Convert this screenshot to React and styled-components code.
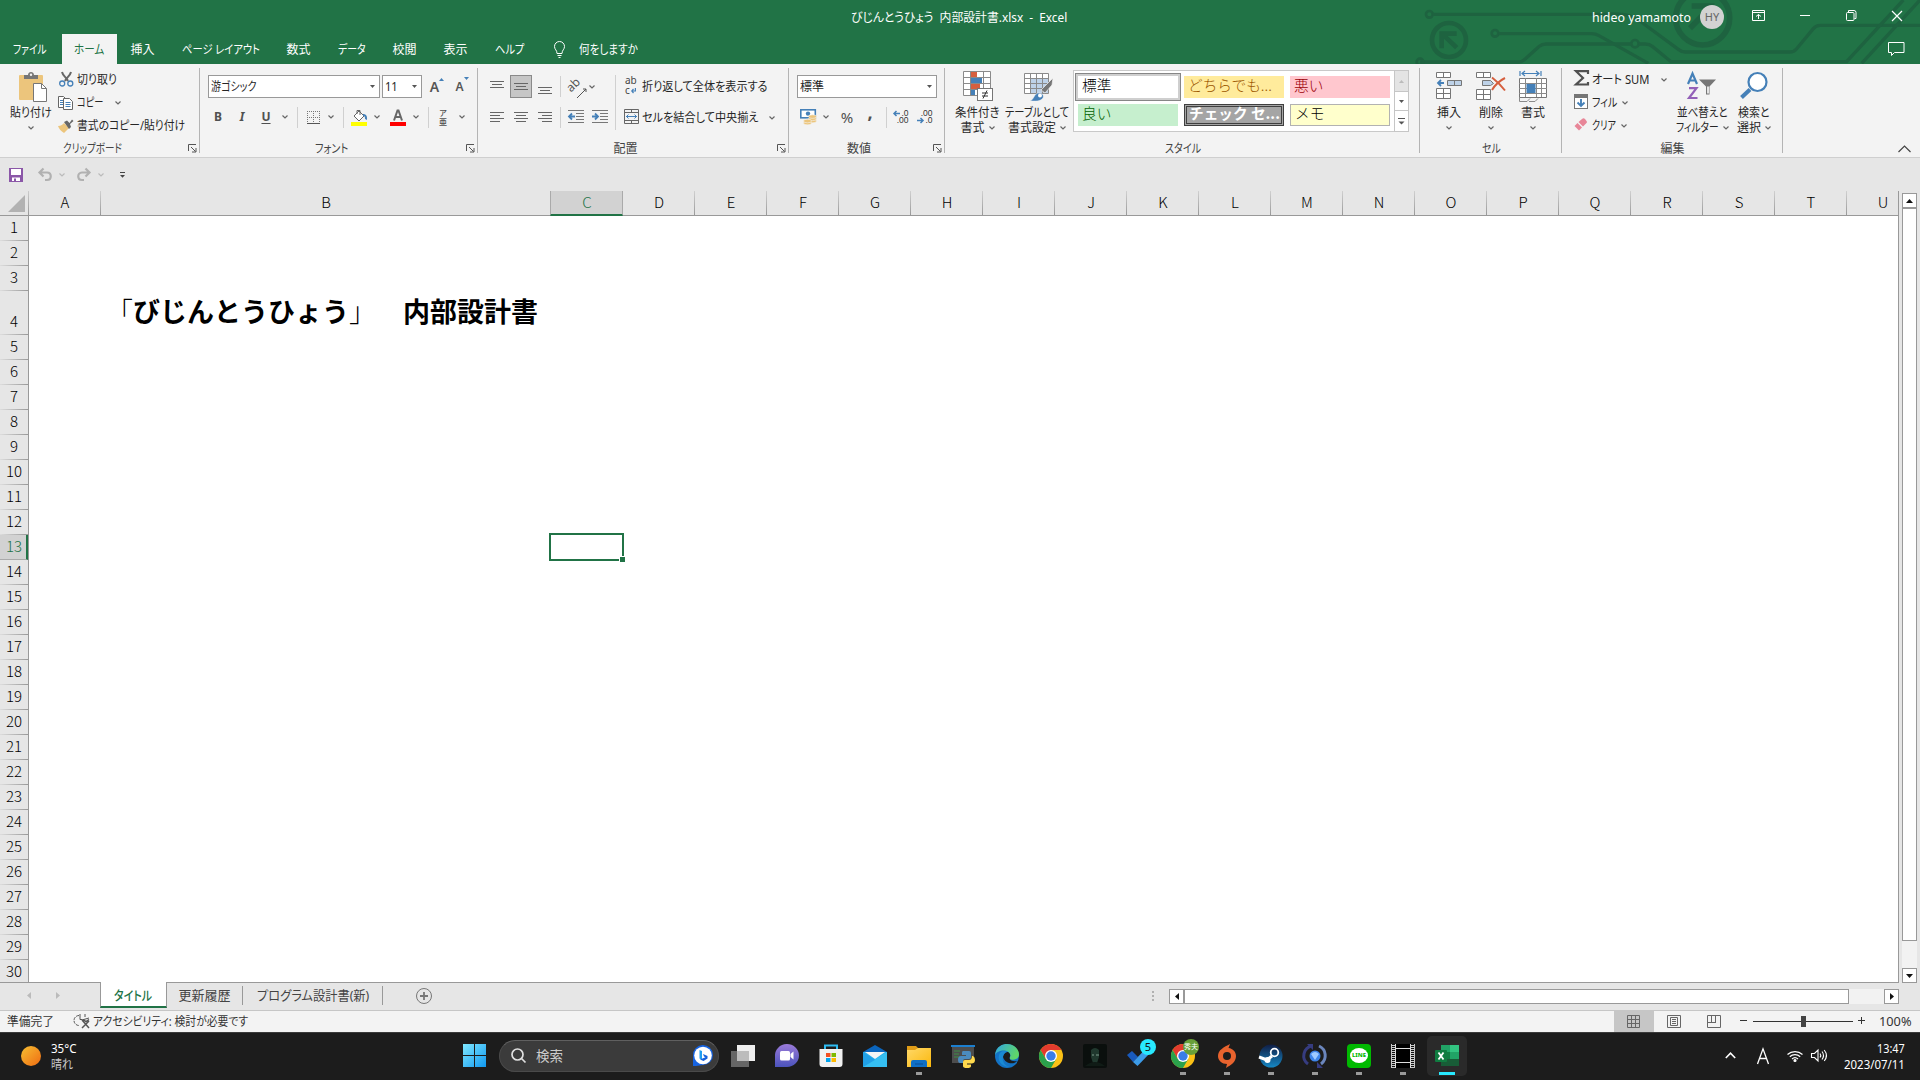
import React, { useLayoutEffect, useRef, useState } from "react";
import styled, { createGlobalStyle, css } from "styled-components";

const GREEN = "#217346";
const INK = "#262626";
const BLUE = "#4580b8";

const Global = createGlobalStyle`
  * { box-sizing: border-box; }
  html, body { margin: 0; padding: 0; overflow: hidden; background: #e6e6e6; }
  body {
    font-family: "Noto Sans", "Noto Sans CJK JP", sans-serif;
    font-size: 12px;
    line-height: 16px;
    color: ${INK};
  }
  svg { display: block; flex: none; overflow: visible; }
`;

/* ---------- text that is condensed to a given width ---------- */
const FitBox = styled.span`
  display: block;
  flex: none;
  width: ${(p) => p.$w}px;
  white-space: pre;
  font-feature-settings: "palt";
`;
const FitInner = styled.span`
  display: inline-block;
  transform-origin: 0 50%;
`;
function Fit({ w, children }) {
  const ref = useRef(null);
  const [scale, setScale] = useState(1);
  useLayoutEffect(() => {
    setScale(w / ref.current.offsetWidth);
  }, [w]);
  return (
    <FitBox $w={w}>
      <FitInner ref={ref} style={{ transform: `scaleX(${scale})` }}>{children}</FitInner>
    </FitBox>
  );
}

/* ---------- layout ---------- */
const Window = styled.div`
  width: 1920px;
  height: 1080px;
  display: flex;
  flex-direction: column;
  overflow: hidden;
`;
const Header = styled.header`
  position: relative;
  height: 64px;
  flex: none;
  background: ${GREEN};
  color: #fff;
`;
const Circuit = styled.svg`
  position: absolute;
  right: 0;
  top: 0;
  overflow: hidden !important;
`;
const TitleBar = styled.div`
  position: relative;
  height: 34px;
  display: flex;
  align-items: center;
  padding-left: 851px;
`;
const TitleText = styled.div`
  padding-top: 2px;
`;
const UserName = styled.div`
  margin-left: 525px;
  padding-top: 1px;
`;
const Avatar = styled.div`
  width: 24px;
  height: 24px;
  border-radius: 50%;
  margin: 0 28px 0 9px;
  background: #d2d2d2;
  color: #666;
  font-size: 11px;
  display: flex;
  align-items: center;
  justify-content: center;
`;
const WinButton = styled.div`
  width: ${(p) => p.$w}px;
  height: 28px;
  padding-bottom: 3px;
  display: flex;
  align-items: center;
`;
const TabBar = styled.nav`
  position: relative;
  height: 30px;
  display: flex;
  align-items: center;
`;
const Tab = styled.div`
  height: 30px;
  padding: 1px 12.5px 0;
  margin-right: 2px;
  display: flex;
  align-items: center;
  ${(p) => p.$active && css`background: #f3f3f3; color: ${GREEN}; margin: 0 1px; padding: 1px 13px 0 12px;`}
`;
const Ask = styled.div`
  display: flex;
  align-items: center;
  gap: 14px;
  margin-left: 16px;
  padding-top: 1px;
`;
const CommentSlot = styled.div`
  margin: 0 15px 1px auto;
`;

const Ribbon = styled.section`
  height: 94px;
  flex: none;
  display: flex;
  padding-top: 4px;
  background: #f3f3f3;
  border-bottom: 1px solid #cfcfcf;
`;
const Group = styled.div`
  width: ${(p) => p.$w}px;
  flex: none;
  display: flex;
  flex-direction: column;
  background: linear-gradient(#b4b4b4, #b4b4b4) right top / 1px 85px no-repeat;
`;
const GroupBody = styled.div`
  height: 72px;
  display: flex;
  padding-left: ${(p) => p.$pl || 0}px;
`;
const Caption = styled.div`
  height: 18px;
  display: flex;
  align-items: center;
  justify-content: center;
  color: #444;
`;
const Launcher = styled.div`
  width: 13px;
  margin-right: 3px;
  padding-left: 4px;
`;
const CaptionText = styled.div`
  flex: 1;
  display: flex;
  justify-content: center;
  padding-top: 2px;
`;
const Stack = styled.div`
  display: flex;
  flex-direction: column;
  margin-left: ${(p) => p.$ml || 0}px;
  ${(p) => p.$w && css`width: ${p.$w}px;`}
`;
const Line = styled.div`
  height: ${(p) => p.$h || 23}px;
  display: flex;
  align-items: center;
  padding-left: ${(p) => p.$pl || 0}px;
`;
const Cell = styled.div`
  width: ${(p) => p.$w}px;
  height: 24px;
  flex: none;
  display: flex;
  align-items: center;
  justify-content: center;
  color: #505050;
  font-weight: ${(p) => (p.$bold ? 700 : 400)};
  font-style: ${(p) => (p.$italic ? "italic" : "normal")};
  text-decoration: ${(p) => (p.$under ? "underline" : "none")};
  text-underline-offset: 2px;
  font-size: ${(p) => p.$fs || 12}px;
  padding-bottom: ${(p) => p.$lift || 0}px;
`;
const Pressed = styled.div`
  width: 22px;
  height: 23px;
  border: 1px solid #8a8a8a;
  background: #c6c6c6;
  display: flex;
  align-items: center;
  justify-content: center;
`;
const Rule = styled.div`
  width: 1px;
  height: ${(p) => p.$h || 21}px;
  background: #d0d0d0;
`;
const Combo = styled.div`
  width: ${(p) => p.$w}px;
  height: 23px;
  margin-right: 2px;
  padding: 0 4px 0 2px;
  border: 1px solid #999;
  background: #fff;
  display: flex;
  align-items: center;
  justify-content: space-between;
`;
const BigButton = styled.div`
  width: ${(p) => p.$w}px;
  display: flex;
  flex-direction: column;
  align-items: center;
  padding-top: 3px;
`;
const BigIcon = styled.div`
  height: 34px;
  display: flex;
  justify-content: center;
  padding-left: ${(p) => p.$shift || 0}px;
  padding-top: ${(p) => p.$drop || 0}px;
`;
const BigText = styled.div`
  height: 15px;
  display: flex;
  align-items: center;
  justify-content: center;
  gap: 4px;
`;
const Gallery = styled.div`
  width: 336px;
  height: 62px;
  margin: 2px 0 0 2px;
  display: flex;
  justify-content: space-between;
  background: #fff;
  border: 1px solid #c9c9c9;
`;
const Swatches = styled.div`
  display: grid;
  grid-template-columns: repeat(3, 100px);
  grid-auto-rows: 22px;
  gap: 6px;
  padding: 5px 0 0 4px;
`;
const Swatch = styled.div`
  height: 22px;
  padding: 0 0 5px 4px;
  display: flex;
  align-items: center;
  line-height: 20px;
  font-family: "Noto Sans CJK JP", sans-serif;
  font-size: 14.67px;
  font-weight: ${(p) => (p.$bold ? 700 : 300)};
  background: ${(p) => p.$bg};
  color: ${(p) => p.$fg};
  ${(p) => p.$picked && css`box-shadow: 0 0 0 2px #cfcfcf, 0 0 0 3px #868686;`}
  ${(p) => p.$check && css`border: 1px solid #3f3f3f; box-shadow: inset 0 0 0 1px #a5a5a5, inset 0 0 0 2px #3f3f3f;`}
  ${(p) => p.$memo && css`border: 1px solid #b2b2b2;`}
`;
const GalleryScroll = styled.div`
  width: 15px;
  margin: -1px -1px;
  display: grid;
  grid-template-rows: 22px 19px 21px;
  & > div { border: 1px solid #c6c6c6; border-top-width: 0; display: flex; align-items: center; justify-content: center; }
  & > div:first-child { background: #e4e4e4; border-top-width: 1px; }
`;
const RibbonEnd = styled.div`
  margin: 77px 9px 0 auto;
`;

const Quick = styled.div`
  height: 33px;
  flex: none;
  display: flex;
  align-items: center;
  padding: 0 0 0 9px;
`;
const QuickItem = styled.div`
  width: ${(p) => p.$w}px;
`;

const Work = styled.main`
  height: 792px;
  flex: none;
  display: flex;
`;
const Sheet = styled.div`
  width: 1899px;
  border-right: 1px solid #999;
  border-bottom: 1px solid #999;
  margin-right: 3px;
  overflow: hidden;
  background: #fff;
`;
const ColumnHeads = styled.div`
  height: 25px;
  display: flex;
  width: 2000px;
  background: #e6e6e6;
  border-bottom: 1px solid #999;
  font-family: "Noto Sans CJK JP", sans-serif;
  font-size: 15px;
  font-weight: 300;
  color: #000;
`;
const Corner = styled.div`
  width: 29px;
  height: 24px;
  padding: 4px 0 0 8px;
  background: linear-gradient(#ccc, #999) right / 1px 100% no-repeat;
`;
const ColumnHead = styled.div`
  width: ${(p) => p.$w}px;
  height: 24px;
  display: flex;
  align-items: center;
  justify-content: center;
  padding: 0 0 2px 0;
  background: linear-gradient(#d0d0d0, #999) right / 1px 100% no-repeat;
  ${(p) => p.$on && css`
    height: 25px;
    padding: 0 0 1px 1px;
    color: ${GREEN};
    margin-left: -1px;
    border: 1px solid #aaa;
    border-width: 0 1px 2px;
    border-bottom-color: ${GREEN};
    background: #d2d2d2;
  `}
`;
const Grid = styled.div`
  position: relative;
  display: flex;
  height: 766px;
`;
const RowHeads = styled.div`
  width: 29px;
  flex: none;
  background: #e6e6e6;
  border-right: 1px solid #999;
  overflow: hidden;
  font-family: "Noto Sans CJK JP", sans-serif;
  font-size: 15px;
  font-weight: 300;
  color: #000;
`;
const RowHead = styled.div`
  height: ${(p) => p.$h}px;
  display: flex;
  align-items: flex-end;
  justify-content: center;
  padding-bottom: 6px;
  background: linear-gradient(90deg, #ddd, #999) bottom / 100% 1px no-repeat;
  ${(p) => p.$on && css`
    color: ${GREEN};
    background: #d2d2d2;
    border-bottom: 1px solid #aaa;
    border-right: 2px solid ${GREEN};
    padding: 0 0 5px 2px;
  `}
`;
const Body = styled.div`
  padding-top: 73px;
  display: flex;
`;
const DocTitle = styled.div`
  width: 450px;
  height: 43px;
  margin-left: 68px;
  display: flex;
  justify-content: center;
  align-items: center;
  font-family: "Noto Sans CJK JP", sans-serif;
  font-size: 27px;
  line-height: 40px;
  font-weight: 700;
  color: #000;
  white-space: pre;
  text-spacing-trim: space-all;
  font-feature-settings: "chws" 0, "halt" 0;
`;
const Bracket = styled.span`
  display: flex;
  width: 27px;
  font-weight: 300;
  justify-content: ${(p) => (p.$open ? "flex-end" : "flex-start")};
`;
const Gap = styled.span`
  width: 27px;
`;
const Selection = styled.div`
  position: absolute;
  left: 549px;
  top: 317px;
  width: 75px;
  height: 28px;
  border: 2px solid ${GREEN};
  &::after {
    content: "";
    position: absolute;
    right: -3px;
    bottom: -3px;
    width: 5px;
    height: 5px;
    background: ${GREEN};
    box-shadow: -1px -1px 0 #fff;
  }
`;
const VScroll = styled.div`
  width: 15px;
  height: 792px;
  padding-top: 2px;
  display: flex;
  flex-direction: column;
  background: linear-gradient(#e6e6e6, #e6e6e6) top / 100% 2px no-repeat, #f2f2f2;
`;
const ScrollButton = styled.div`
  width: 15px;
  height: 15px;
  flex: none;
  border: 1px solid #999;
  background: #fff;
  display: flex;
  align-items: center;
  justify-content: center;
`;
const Thumb = styled.div`
  border: 1px solid #999;
  background: #fff;
  ${(p) => (p.$vertical ? css`height: 733px; margin-bottom: 27px;` : css`width: 665px; height: 15px; margin-right: 35px;`)}
`;

const SheetBar = styled.div`
  height: 27px;
  flex: none;
  display: flex;
  color: #444;
  font-size: 13px;
`;
const Nav = styled.div`
  width: 100px;
  height: 25px;
  display: flex;
  align-items: center;
  gap: 25px;
  padding-left: 27px;
`;
const SheetTab = styled.div`
  height: 25px;
  width: ${(p) => p.$w}px;
  display: flex;
  align-items: center;
  justify-content: center;
  padding: 0 1px 1px 0;
  background: linear-gradient(#999, #999) right 3px / 1px 19px no-repeat;
  ${(p) => p.$on && css`
    height: 26px;
    margin-top: -1px;
    padding: 1px 1px 0 0;
    background: #fff;
    color: ${GREEN};
    border: 1px solid #999;
    border-width: 0 1px 2px;
    border-bottom-color: ${GREEN};
    font-weight: 500;
  `}
`;
const AddSheet = styled.div`
  margin: 5px 0 0 33px;
`;
const HScroll = styled.div`
  margin: 6px 21px 0 auto;
  height: 15px;
  width: 730px;
  display: flex;
  background: #f2f2f2;
`;
const Dots = styled.div`
  margin: 8px 0 0 720px;
`;

const Status = styled.footer`
  height: 22px;
  flex: none;
  display: flex;
  align-items: center;
  padding-left: 7px;
  background: #f3f3f3;
  border-top: 1px solid #c6c6c6;
  color: #333;
`;
const StatusIcon = styled.div`
  margin: 0 3px 0 20px;
`;
const ViewButton = styled.div`
  width: 40px;
  height: 21px;
  padding: 0 1px 1px 0;
  display: flex;
  align-items: center;
  justify-content: center;
  background: ${(p) => (p.$on ? "#c6c6c6" : "transparent")};
`;
const Views = styled.div`
  margin-left: auto;
  display: flex;
`;
const Zoom = styled.div`
  width: 33px;
  margin: 0 8px 0 14px;
`;

const Taskbar = styled.div`
  height: 48px;
  flex: none;
  display: flex;
  align-items: center;
  padding-bottom: 2px;
  background: #1c1c1c;
  border-top: 1px solid #3a3a3a;
  color: #fff;
`;
const Weather = styled.div`
  width: 463px;
  padding-left: 21px;
  display: flex;
  align-items: center;
  gap: 10px;
`;
const Lines = styled.div`
  display: flex;
  flex-direction: column;
  margin-top: 3px;
  align-items: ${(p) => (p.$end ? "flex-end" : "flex-start")};
`;
const Dim = styled.div`
  color: #c8c8c8;
`;
const Search = styled.div`
  width: 220px;
  height: 32px;
  margin: 0 2px 0 13px;
  padding: 0 5px 0 11px;
  border-radius: 16px;
  border: 1px solid #4a4a4a;
  border-top-color: #606060;
  background: #3b3b3b;
  display: flex;
  align-items: center;
  font-size: 14px;
  color: #ccc;
`;
const SearchText = styled.div`
  flex: 1;
  padding-left: 10px;
`;
const TaskSlot = styled.div`
  width: ${(p) => (p.$active ? 40 : 44)}px;
  height: ${(p) => (p.$active ? 40 : 46)}px;
  margin-left: ${(p) => (p.$active ? 2 : 0)}px;
  border-radius: 5px;
  display: flex;
  align-items: center;
  justify-content: center;
  background:
    ${(p) => p.$run && css`linear-gradient(#9a9a9a, #9a9a9a) center 39px / 6px 3px no-repeat,`}
    ${(p) => p.$active && css`linear-gradient(#28e9ff, #28e9ff) center 36px / 16px 3px no-repeat,`}
    ${(p) => (p.$active ? "#2a2a2a" : "transparent")};
`;
const Badged = styled.div`
  position: relative;
`;
const Badge = styled.div`
  position: absolute;
  left: ${(p) => p.$x}px;
  top: -5px;
  width: 16px;
  height: 16px;
  border-radius: 50%;
  background: ${(p) => p.$bg};
  color: ${(p) => p.$fg};
  font-size: ${(p) => p.$fs}px;
  line-height: 16px;
  display: flex;
  align-items: center;
  justify-content: center;
  white-space: nowrap;
`;
const Tray = styled.div`
  margin-left: auto;
  padding-right: 15px;
  display: flex;
  align-items: center;
`;
const TrayItem = styled.div`
  width: ${(p) => p.$w}px;
`;

/* ---------- small glyphs ---------- */
const Chevron = ({ c = "#666" }) => (
  <svg width="6" height="4" viewBox="0 0 6 4"><path d="M.5.5 3 3 5.500.5" fill="none" stroke={c} strokeWidth="1.2" /></svg>
);
const TRI = { down: "M0 0h6L3 3z", up: "M0 3h6L3 0z", left: "M4 0v8L0 4z", right: "M0 0v8l4-4z" };
const Tri = ({ d = "down", c = "#555", w = 5 }) => {
  const side = d === "left" || d === "right";
  return (
    <svg width={side ? 4 : w} height={side ? w + 1 : w > 6 ? 4 : 3} viewBox={side ? "0 0 4 8" : "0 0 6 3"} preserveAspectRatio="none">
      <path d={TRI[d]} fill={c} />
    </svg>
  );
};
const LaunchIcon = () => (
  <svg width="9" height="9" viewBox="0 0 9 9" fill="none" stroke="#555"><path d="M.5 7V.5H8M3 3l4.500 4.500M8 4v4H4" /></svg>
);
const Bars = ({ rows, w = 14, h = 14 }) => (
  <svg width={w} height={h} viewBox={`0 0 ${w} ${h}`} stroke="#666">
    {rows.map(([x, y, l]) => <path key={y} d={`M${x} ${y}.5h${l}`} />)}
  </svg>
);

const Paste = () => (
  <svg width="28" height="31" viewBox="0 0 28 31">
    <rect x="0" y="3" width="24" height="25" rx="1" fill="#ecc57c" />
    <path d="M5 7V3h4c0-4 6-4 6 0h4v4z" fill="#767676" /><circle cx="12" cy="2.800" r="1.200" fill="#f3f3f3" />
    <path d="M14.500 11.500h8l5 5v13h-13z" fill="#fff" stroke="#767676" /><path d="M22.500 11.500v5h5" fill="none" stroke="#767676" />
  </svg>
);
const Cut = () => (
  <svg width="15" height="15" viewBox="0 0 15 15" fill="none">
    <path d="M3 0c1 4 4 5 6 9M12 0c-1 4-4 5-6 9" stroke="#666" strokeWidth="2" />
    <circle cx="3.200" cy="11.500" r="2.500" stroke={BLUE} strokeWidth="1.300" /><circle cx="11.300" cy="11.500" r="2.500" stroke={BLUE} strokeWidth="1.300" />
  </svg>
);
const Copy = () => (
  <svg width="16" height="14" viewBox="0 0 16 14" fill="#fff" stroke="#666">
    <path d="M.5.5h5l3 3v8h-8z" /><path d="M2 4.500h3M2 6.500h3M2 8.500h3" stroke={BLUE} />
    <path d="M5.500 2.500h6l3 3v8h-9z" /><path d="M7.500 6.500h5M7.500 8.500h5M7.500 10.500h5" stroke={BLUE} />
  </svg>
);
const Brush = () => (
  <svg width="16" height="14" viewBox="0 0 16 14">
    <path d="M0 7c3 0 5-2 6-3l5 5-5 5C3 12 1 10 0 7z" fill="#ecc57c" />
    <path d="m6 3 3-1.500L11.500 4 14 .5 15.500 2 12 5l1 3-2 2z" fill="#666" />
  </svg>
);
const Borders = () => (
  <svg width="13" height="13" viewBox="0 0 13 13" stroke="#777"><path d="M0 .5h13M.5 0v12M6.500 0v12M12.500 0v12M0 6.500h13" strokeDasharray="1 1" /><path d="M0 12.500h13" stroke="#555" /></svg>
);
const Fill = () => (
  <svg width="17" height="17" viewBox="0 0 17 17">
    <path d="m3 7 5-5 5 5-5 5z" fill="#fff" stroke="#666" /><path d="M6 5V1.500h3V6" fill="none" stroke="#666" />
    <path d="M12 5c3 0 4.500 2 4 6l-2-1c0-2 0-3-2-3z" fill={BLUE} /><rect y="13" width="16" height="4" fill="#ffff00" />
  </svg>
);
const FontColor = () => (
  <svg width="16" height="17" viewBox="0 0 16 17"><path d="M4 11.500 7.500 1.500h1l3.500 10M5.500 8h5" fill="none" stroke="#666" strokeWidth="2" /><rect y="13" width="16" height="4" fill="#ff0000" /></svg>
);
const SizeA = styled.span`
  display: flex;
  align-items: flex-start;
  color: #555;
  font-weight: 600;
  font-size: ${(p) => p.$fs}px;
  line-height: 18px;
  padding-top: ${(p) => p.$pt}px;
  svg { margin-top: ${(p) => p.$mt}px; }
`;
const Ruby = styled.div`
  display: flex;
  flex-direction: column;
  align-items: center;
  font-size: 8px;
  line-height: 9px;
  font-weight: 500;
`;
const Orient = styled.div`
  display: flex;
  position: relative;
  color: #555;
  span { display: block; transform: rotate(-45deg); font-size: 12px; line-height: 12px; margin: -4px 2px 0 -3px; }
  svg { position: absolute; left: 4px; top: 2px; }
`;
const WrapIcon = styled.div`
  width: 22px;
  display: flex;
  flex-direction: column;
  padding: 0 0 3px 5px;
  font-size: 10px;
  line-height: 9.5px;
  color: #444;
  div { display: flex; align-items: center; gap: 1px; }
`;
const Indent = ({ out }) => (
  <svg width="16" height="13" viewBox="0 0 16 13"><path d="M0 .5h16M8 3.500h8M8 6.500h8M8 9.500h8M0 12.500h16" stroke="#777" />
    <path d={out ? "M7 6.500H2M4 3.500l-3 3 3 3" : "M0 6.500h5M3 3.500l3 3-3 3"} stroke={BLUE} strokeWidth="1.800" fill="none" /></svg>
);
const Merge = () => (
  <svg width="15" height="15" viewBox="0 0 15 15" fill="none" stroke="#666"><path d="M.5.5h14v14H.5zM0 3.500h15M0 11.500h15M7.500 0v3.500M7.500 11.500V15" /><path d="M2 7.500h11M4.500 5.500l-2 2 2 2M10.500 5.500l2 2-2 2" stroke={BLUE} /></svg>
);
const Cash = () => (
  <svg width="17" height="16" viewBox="0 0 17 16"><rect x=".8" y=".8" width="14.500" height="8" fill="#fff" stroke={BLUE} strokeWidth="1.600" /><circle cx="8" cy="4.600" r="2.200" fill={BLUE} />
    <g fill="#ecc57c" stroke="#f3f3f3" strokeWidth=".6"><ellipse cx="12.500" cy="12" rx="4" ry="1.800" /><ellipse cx="12.500" cy="9.800" rx="4" ry="1.800" /><ellipse cx="12.500" cy="7.600" rx="4" ry="1.800" /><ellipse cx="7.500" cy="14" rx="4" ry="1.800" /><ellipse cx="7.500" cy="12" rx="4" ry="1.800" /></g></svg>
);
const Decimal = styled.div`
  width: 15px;
  display: flex;
  flex-direction: column;
  align-items: flex-end;
  font-family: "Liberation Sans", sans-serif;
  font-size: 8.5px;
  line-height: 7px;
  color: #333;
  div { display: flex; align-items: center; gap: 1px; }
`;
const Arrow = ({ d }) => (
  <svg width="7" height="5" viewBox="0 0 7 5" fill="none" stroke={BLUE} strokeWidth="1.500"><path d={d === "l" ? "M7 2.500H1M3.500 0 1 2.500 3.500 5" : "M0 2.500h6M3.500 0 6 2.500 3.500 5"} /></svg>
);
const ReturnArrow = () => (
  <svg width="5" height="5" viewBox="0 0 5 5" fill="none" stroke={BLUE} strokeWidth="1.200"><path d="M4.400 0v3H1M2.500 1 .8 3l1.700 2" /></svg>
);
const CondIcon = () => (
  <svg width="30" height="30" viewBox="0 0 30 30"><rect x=".5" y=".5" width="27" height="24" fill="#fff" /><path d="M8 1h6v5H8zM8 13h9v5H8z" fill="#d65f3e" /><path d="M8 7h11v5H8zM8 19h4v5H8z" fill={BLUE} />
    <path d="M.5.5h27v24H.5zM.5 6.500h27M.5 12.500h27M.5 18.500h27M7.500 0v24M20.500 0v24" fill="none" stroke="#8a8a8a" />
    <rect x="14.500" y="17.500" width="15" height="12" fill="#fff" stroke="#767676" /><path d="M19 22h6M19 25h6M24 19.500l-4 8" stroke="#333" /></svg>
);
const TableIcon = () => (
  <svg width="30" height="28" viewBox="0 0 30 28"><rect x=".5" y=".5" width="24" height="20" fill="#fff" /><rect x="7" y="6" width="17" height="15" fill="#bed2e8" />
    <path d="M.5.5h24v20H.5zM0 5.500h25M0 10.500h25M0 15.500h25M6.500 0v21M12.500 0v21M18.500 0v21" fill="none" stroke="#8a8a8a" />
    <path d="m29 5-1 7-7 8-4-3z" fill="#767676" stroke="#f3f3f3" strokeWidth=".7" /><path d="M6 28c4-1 4-8 9-8 4 0 5 3 4 5-3 4-8 3-13 3z" fill={BLUE} stroke="#f3f3f3" strokeWidth=".5" /><circle cx="16" cy="22.500" r="2" fill="#fff" /></svg>
);
const InsertIcon = () => (
  <svg width="27" height="28" viewBox="0 0 27 28" fill="#fff" stroke="#767676"><path d="M.5.5h14v5H.5zM7.500 0v6M.5 16.500h14v10H.5zM7.500 16v11M0 21.500h15" /><path d="M11.500 8.500h14v5h-14z" fill="#bed2e8" /><path d="M18.500 8v6" /><path d="M8 11H2M5 8l-3 3 3 3" fill="none" stroke={BLUE} strokeWidth="1.800" /></svg>
);
const DeleteIcon = () => (
  <svg width="30" height="28" viewBox="0 0 30 28" fill="#fff" stroke="#767676"><path d="M.5.5h14v5H.5zM7.500 0v6M.5 17.500h14v10H.5zM7.500 17v11M0 22.500h15" /><path d="M6.500 8.500h8l3 3-3 2h-8z" fill="#bed2e8" /><path d="M16 5.500c4 3 9 8 13 13M29 6c-6 3-10 7-13 12" fill="none" stroke="#d65f3e" strokeWidth="2" /></svg>
);
const FormatIcon = () => (
  <svg width="28" height="32" viewBox="0 0 28 32" fill="none"><path d="M1 0v5M22 0v5M3 2.500h17M6 0 3 2.500 6 5M17 0l3 2.500L17 5" stroke={BLUE} strokeWidth="1.200" />
    <path d="M.5 7.500h27v19H.5z" fill="#fff" stroke="#767676" /><path d="M0 12.500h28M0 22.500h28M6.500 7v19M17.500 7v19M22.500 7v19M0 17.500h28" stroke="#8a8a8a" /><rect x="7.500" y="13" width="9" height="9" fill={BLUE} /><path d="M.5 26v4.500H8l3-3M10 30.500h6l3-3" stroke="#8a8a8a" /></svg>
);
const Sigma = () => <svg width="15" height="16" viewBox="0 0 15 16"><path d="M14 4V1.200H2L9 8l-7 6.500h12V12" fill="none" stroke="#505050" strokeWidth="2.200" /></svg>;
const FillDown = () => (
  <svg width="14" height="15" viewBox="0 0 14 15"><rect x=".5" y=".5" width="13" height="14" fill="#fff" stroke="#767676" /><rect width="14" height="4" fill="#767676" /><path d="M7 5v7M3.500 8.500 7 12l3.500-3.500" fill="none" stroke={BLUE} strokeWidth="1.900" /></svg>
);
const Eraser = () => <svg width="14" height="13" viewBox="0 0 14 13"><path d="M8 1c1-1 2-1 3 0l1.500 2c.8 1 .5 1.500 0 2L9 8.500 4.500 4z" fill="#e88698" /><path d="M3.500 5 8 9.500l-3 3-4.500-4.500z" fill="#e88698" /></svg>;
const SortIcon = () => (
  <svg width="30" height="28" viewBox="0 0 30 28" fill="none"><path d="M1 12 5.500 1.500 10 12M3 8.500h5" stroke={BLUE} strokeWidth="2.200" /><path d="M2 16.200h7.500L2 26h8.500" stroke="#9360b8" strokeWidth="2.200" /><path d="M12 7.500h17l-6.500 7v8h-3.500v-8z" fill="#767676" /><path d="M20.200 14.500h1.600v7h-1.600z" fill="#fff" /></svg>
);
const FindIcon = () => <svg width="28" height="27" viewBox="0 0 28 27"><path d="M1.500 25.500 10 17.500" stroke={BLUE} strokeWidth="4" /><circle cx="17.500" cy="10" r="9" fill="#fff" stroke={BLUE} strokeWidth="2.200" /></svg>;

/* ---------- taskbar drawings ---------- */
const Chrome = () => (
  <svg width="24" height="24" viewBox="0 0 24 24"><circle cx="12" cy="12" r="12" fill="#fbc116" /><path d="M1.600 6A12 12 0 0 1 22.400 6H12L6.800 15z" fill="#e33b2e" /><path d="M1.600 6A12 12 0 0 0 12 24l5.200-9H6.800z" fill="#2ba24c" /><circle cx="12" cy="12" r="6" fill="#fff" /><circle cx="12" cy="12" r="4.700" fill="#3a7de8" /></svg>
);
const Icon24 = ({ children }) => <svg width="24" height="24" viewBox="0 0 24 24">{children}</svg>;
const ICONS = {
  task: <Icon24><path d="M0 7h18v16H0z" fill="#666" /><path d="M6 1h18v16H6z" fill="#eee" /><path d="M6 7h12v10H6z" fill="#bcbcbc" /></Icon24>,
  chat: <Icon24><path d="M0 23V12A12 11.500 0 1 1 12 23z" fill="url(#chat)" /><rect x="5" y="7" width="10" height="9.500" rx="1.500" fill="#fff" /><path d="m15.500 10 3-2.500v8l-3-2.500z" fill="#fff" /></Icon24>,
  store: <Icon24><path d="M6 6V1.500h12V6" fill="none" stroke="#2ebcf2" strokeWidth="2" /><path d="M.5 5h23v15a3 3 0 0 1-3 3h-17a3 3 0 0 1-3-3z" fill="#f1f1f1" /><path d="M7 9h4.500v4H7z" fill="#f25022" /><path d="M12.500 9h4.500v4h-4.500z" fill="#7fba00" /><path d="M7 14h4.500v4H7z" fill="#00a4ef" /><path d="M12.500 14h4.500v4h-4.500z" fill="#ffb900" /></Icon24>,
  mail: <Icon24><path d="M0 8 12 1l12 7z" fill="#0b65bd" /><path d="M0 8h24v15H0z" fill="#27b0ee" /><path d="M2 8h20l-10 7z" fill="#f5f5f5" /><path d="m0 23 24-15v15z" fill="#3fc9f5" opacity=".6" /><path d="m0 8 12 8-12 7z" fill="#1a8fe0" opacity=".5" /></Icon24>,
  folder: <Icon24><path d="M0 2h9l2 2v5H0z" fill="#e09c17" /><path d="M0 6h8l3-2h13v19H0z" fill="url(#fold)" /><path d="M4 23v-5q0-2 2-2h12q2 0 2 2v5z" fill="#0f6fc6" /><path d="M8 20h8" stroke="#0b4f96" /></Icon24>,
  py: <Icon24><path d="M1 1h22v18H1z" fill="#4d4d4d" /><path d="M0 1h24v2H0z" fill="#1c7fcf" /><path d="M3 7h6M3 10h5M3 13h6" stroke="#3f8f46" /><path d="M12 7h6q2 0 2 2v4q0 2-2 2h-4q-2 0-2 2v2H9q-2 0-2-3.500T10 12h5v-1h-4V9q0-2 1-2z" fill="#4b8bbe" /><path d="M21 12h1q2 1 2 4t-3 3.500h-5v1h4v1.500q0 2-4 2t-4-2v-4q0-2 2-2h4q3 0 3-4z" fill="#ffd94d" /></Icon24>,
  edge: <Icon24><circle cx="12" cy="12" r="12" fill="#1473c5" /><path d="M0 11C1 2 8 0 12 0c8 0 12 6 12 10.500 0 4-4 6-8 5-2-.6-1-2-.5-4C15 8 11 6 7 6.500 3 7 1 9 0 11z" fill="url(#edge)" /><path d="M8 13c0-3 2-5 5-5 2 1 2.500 3 2 4.500-1.500 2.500 1 5.500 7 4.500-3 4-12 3-14-4z" fill="#1c1c1c" /><path d="M4 11c-2 8 5 12 11 12-5-1-8-5-7-10 1-4 3-5 5-5-4-2-8-1-9 3z" fill="#1a8ad4" /></Icon24>,
  dark: <Icon24><rect width="24" height="24" rx="2" fill="#0a0f0d" /><path d="M8 6q4-4 8 0v7l-2 6h-4l-2-6z" fill="#20382e" /><path d="M9 11h2M13 11h3" stroke="#7d9b8b" /><path d="M2 22q10-8 20 0" fill="#101b16" /></Icon24>,
  todo: <Icon24><path d="m0 11 5-4 6 6-5 5z" fill="#195abd" /><path d="M6 18 18.500 5 23 9 10.500 22z" fill="#3c9be8" /></Icon24>,
  origin: <Icon24><path d="M15 0 13.500 4C18 4.500 21 8 21 12c0 6-5 9-10 12l1-4c-5 0-9-3.500-9-8 0-6 6-9 12-12z" fill="#e8632e" /><circle cx="12" cy="12" r="4" fill="#1c1c1c" /></Icon24>,
  steam: <Icon24><circle cx="12" cy="12" r="11.500" fill="url(#steam)" /><circle cx="15.500" cy="8.500" r="3.800" fill="none" stroke="#fff" strokeWidth="1.800" /><path d="m0 13 8 3 5-4" fill="none" stroke="#fff" strokeWidth="3" /><circle cx="8.500" cy="16" r="3" fill="#fff" /></Icon24>,
  ring: <Icon24><path d="M9 2A10 10 0 0 0 5 20" fill="none" stroke="#363c80" strokeWidth="3" /><path d="M16 2a10.500 10.500 0 0 1 2 18" fill="none" stroke="#6b86bd" strokeWidth="3" /><path d="M4 0h6v6zM20 24h-6v-6z" fill="#363c80" /><circle cx="12" cy="12" r="5.500" fill="#3f86ea" /><path d="M8 10q4-4 8 0l-4 6z" fill="#9fcbff" /></Icon24>,
  film: <Icon24><path d="M0 0h24v24H0z" fill="#c9c9c9" /><path d="M5 0h14v24H5z" fill="#000" /><path d="M2.500 0v24M21.500 0v24" stroke="#111" strokeWidth="3" strokeDasharray="1 1" /><path d="M4.500 0v24M19.500 0v24M5 4.500h14M5 18.500h14" stroke="#ddd" /></Icon24>,
  xl: <Icon24><path d="M6 1h18v21H6z" fill="#21a366" /><path d="M15 1h9v7h-9z" fill="#33c481" /><path d="M6 8h9v7H6z" fill="#107c41" /><path d="M6 15h18v7H6z" fill="#185c37" /><path d="M15 8h9v7h-9z" fill="#21a366" /><rect y="6" width="12" height="12" rx="1" fill="#107c41" /><path d="m3.500 8.500 5 7M8.500 8.500l-5 7" stroke="#fff" strokeWidth="1.800" /></Icon24>,
};
const LineTile = styled.div`
  width: 24px;
  height: 24px;
  border-radius: 4px;
  background: #00b900;
  display: flex;
  align-items: center;
  justify-content: center;
  span {
    width: 18px;
    height: 15px;
    border-radius: 50%;
    background: #fff;
    color: #00b900;
    font: 800 6px/15px "Noto Sans", sans-serif;
    text-align: center;
  }
`;
const Defs = () => (
  <svg width="0" height="0">
    <defs>
      <linearGradient id="chat" x2="0" y2="1"><stop stopColor="#9a7ad8" /><stop offset="1" stopColor="#4b53bc" /></linearGradient>
      <linearGradient id="fold" x2="1" y2="1"><stop stopColor="#ffd868" /><stop offset="1" stopColor="#fbb80c" /></linearGradient>
      <linearGradient id="edge" x2="1" y2=".4"><stop stopColor="#2fa5e4" /><stop offset="1" stopColor="#5fd668" /></linearGradient>
      <linearGradient id="steam" x2="0" y2="1"><stop stopColor="#101d44" /><stop offset="1" stopColor="#1688c4" /></linearGradient>
      <linearGradient id="win" x2="1" y2="1"><stop stopColor="#7fe8ff" /><stop offset="1" stopColor="#1098f0" /></linearGradient>
      <linearGradient id="sun" x2="1" y2="1"><stop stopColor="#f7c032" /><stop offset="1" stopColor="#ef6b12" /></linearGradient>
    </defs>
  </svg>
);

/* ---------- sections ---------- */
const TABS = [["ファイル", 34], ["ホーム", 30], ["挿入", 24], ["ページ レイアウト", 78], ["数式", 24], ["データ", 28], ["校閲", 24], ["表示", 24], ["ヘルプ", 29]];

function Top() {
  return (
    <Header>
      <Circuit width="520" height="64" viewBox="0 0 1560 192" fill="none" stroke="#1e6340" strokeWidth="10">
        <circle cx="88" cy="43" r="10" strokeWidth="8" /><path d="M98 43H610c70-5 95 5 130 35l95 70q10 8 20 8H1170q12 0 20-10l50-60q8-10 20-10H1560" />
        <circle cx="285" cy="100" r="10" strokeWidth="8" /><path d="M296 101H575q12 0 22 6L745 190" />
        <circle cx="705" cy="131" r="11" strokeWidth="8" /><path d="M60 186H355q10 0 18-7l45-40q8-7 20-7H694M716 132h20q12 0 22 8l55 45H1340L1510 0M1385 190 1560 0" />
        <circle cx="60" cy="186" r="10" strokeWidth="8" />
        <circle cx="147" cy="120" r="51" strokeWidth="14" /><path d="M125 145V101h45M128 103l42 40" strokeWidth="14" />
        <circle cx="908" cy="54" r="81" strokeWidth="17" /><path d="M875 18h60v60M933 20 870 85" strokeWidth="17" />
      </Circuit>
      <TitleBar>
        <TitleText><Fit w={216}>{"びじんとうひょう  内部設計書.xlsx  -  Excel"}</Fit></TitleText>
        <UserName><Fit w={99}>hideo yamamoto</Fit></UserName>
        <Avatar>HY</Avatar>
        <WinButton $w={48}><svg width="13" height="11" viewBox="0 0 13 11" fill="none" stroke="#fff"><path d="M.5.5h12v10H.5zM0 2.500h13M6.500 9V4.500M4 6.500l2.500-2 2.500 2" /></svg></WinButton>
        <WinButton $w={46}><svg width="10" height="2" viewBox="0 0 10 2"><path d="M0 .5h10" stroke="#fff" /></svg></WinButton>
        <WinButton $w={46}><svg width="11" height="11" viewBox="0 0 11 11" fill="none" stroke="#fff"><rect x=".5" y="2.500" width="7.500" height="8" rx="1" /><path d="M2.500 2V.5H8a2 2 0 0 1 2 2v6H8.500" /></svg></WinButton>
        <WinButton $w={10}><svg width="10" height="10" viewBox="0 0 10 10"><path d="m0 0 10 10M10 0 0 10" stroke="#fff" strokeWidth="1.200" /></svg></WinButton>
      </TitleBar>
      <TabBar>
        {TABS.map(([t, w]) => <Tab key={t} $active={t === "ホーム"}><Fit w={w}>{t}</Fit></Tab>)}
        <Ask>
          <svg width="11" height="17" viewBox="0 0 11 17" fill="none" stroke="#fff"><path d="M3 12.500C3 9 .5 8.500.5 5.500a5 5 0 0 1 10 0C10.500 8.500 8 9 8 12.500zM3.500 14.500h4M4.500 16.500h2" /></svg>
          <Fit w={59}>何をしますか</Fit>
        </Ask>
        <CommentSlot><svg width="17" height="14" viewBox="0 0 17 14"><path d="M.5.5h15.500v10H6.500l-3 3v-3h-3z" fill="none" stroke="#fff" /></svg></CommentSlot>
      </TabBar>
    </Header>
  );
}

const GroupCaption = ({ w, children, launch }) => (
  <Caption><CaptionText><Fit w={w}>{children}</Fit></CaptionText>{launch && <Launcher><LaunchIcon /></Launcher>}</Caption>
);
const Drop = ({ w }) => <Cell $w={w}><Chevron /></Cell>;
const Split = ({ w }) => <Cell $w={w}><Rule /></Cell>;

function Big({ w, icon, one, w1, two, w2, shift, drop }) {
  return (
    <BigButton $w={w}>
      <BigIcon $shift={shift} $drop={drop}>{icon}</BigIcon>
      <BigText><Fit w={w1}>{one}</Fit></BigText>
      <BigText>{two && <Fit w={w2}>{two}</Fit>}<Chevron /></BigText>
    </BigButton>
  );
}

function RibbonBar() {
  return (
    <Ribbon>
      <Group $w={200}>
        <GroupBody $pl={6}>
          <Big w={50} icon={<Paste />} shift={3} drop={1} one="貼り付け" w1={42} />
          <Stack $ml={2}>
            <Line><Cell $w={16}><Cut /></Cell><Line $pl={3}><Fit w={40}>切り取り</Fit></Line></Line>
            <Line><Cell $w={16}><Copy /></Cell><Line $pl={3}><Fit w={26}>コピー</Fit></Line><Drop w={30} /></Line>
            <Line><Cell $w={16}><Brush /></Cell><Line $pl={3}><Fit w={108}>書式のコピー/貼り付け</Fit></Line></Line>
          </Stack>
        </GroupBody>
        <GroupCaption w={59} launch>クリップボード</GroupCaption>
      </Group>

      <Group $w={278}>
        <GroupBody>
          <Stack>
            <Line $h={37} $pl={8}>
              <Combo $w={172}><Fit w={46}>游ゴシック</Fit><Tri /></Combo>
              <Combo $w={40}><Fit w={13}>11</Fit><Tri /></Combo>
              <Cell $w={26}><SizeA $fs={14} $pt={0} $mt={0}>A<Tri d="up" c={BLUE} /></SizeA></Cell>
              <Cell $w={24}><SizeA $fs={12} $pt={1} $mt={-1}>A<Tri c={BLUE} /></SizeA></Cell>
            </Line>
            <Line $h={24} $pl={6}>
              <Cell $w={24} $bold>B</Cell><Cell $w={24} $bold $italic><i>I</i></Cell><Cell $w={24} $bold $under>U</Cell><Drop w={14} />
              <Split w={11} /><Cell $w={20}><Borders /></Cell><Drop w={16} />
              <Split w={9} /><Cell $w={22}><Fill /></Cell><Drop w={14} />
              <Cell $w={28}><FontColor /></Cell><Drop w={8} />
              <Split w={17} /><Cell $w={12}><Ruby><span>ア</span><span>亜</span></Ruby></Cell><Drop w={26} />
            </Line>
          </Stack>
        </GroupBody>
        <GroupCaption w={33} launch>フォント</GroupCaption>
      </Group>

      <Group $w={311}>
        <GroupBody $pl={7}>
          <Stack $w={128}>
            <Line $h={37}>
              <Cell $w={24}><Bars rows={[[0, 1, 14], [2, 4, 10], [0, 7, 14]]} /></Cell>
              <Cell $w={24}><Pressed><Bars rows={[[0, 3, 14], [2, 6, 10], [0, 9, 14]]} /></Pressed></Cell>
              <Cell $w={24} $lift={2}><Bars rows={[[0, 8, 14], [2, 11, 10], [0, 14, 14]]} /></Cell>
              <Split w={7} />
              <Cell $w={24}><Orient><span>ab</span><svg width="14" height="14" viewBox="0 0 14 14" fill="none" stroke="#555"><path d="M4 13 13 4M10 4h3v3" /></svg></Orient></Cell>
              <Drop w={8} />
            </Line>
            <Line $h={24}>
              <Cell $w={24}><Bars rows={[[0, 1, 14], [0, 4, 10], [0, 7, 14], [0, 10, 10]]} h={12} /></Cell>
              <Cell $w={24}><Bars rows={[[0, 1, 14], [2, 4, 10], [0, 7, 14], [2, 10, 10]]} h={12} /></Cell>
              <Cell $w={24}><Bars rows={[[0, 1, 14], [4, 4, 10], [0, 7, 14], [4, 10, 10]]} h={12} /></Cell>
              <Split w={7} /><Cell $w={24} $lift={1}><Indent out /></Cell><Cell $w={24} $lift={1}><Indent /></Cell>
            </Line>
          </Stack>
          <Line $h={68} $pl={2}><Rule $h={55} /></Line>
          <Stack $ml={4}>
            <Line $h={38}><WrapIcon><span>ab</span><div>c<ReturnArrow /></div></WrapIcon><Fit w={126}>折り返して全体を表示する</Fit></Line>
            <Line $h={24}><Cell $w={22} $lift={3}><Merge /></Cell><Fit w={116}>セルを結合して中央揃え</Fit><Drop w={28} /></Line>
          </Stack>
        </GroupBody>
        <GroupCaption w={24} launch>配置</GroupCaption>
      </Group>

      <Group $w={156}>
        <GroupBody>
          <Stack>
            <Line $h={37} $pl={8}><Combo $w={140}><Fit w={24}>標準</Fit><Tri /></Combo></Line>
            <Line $h={24} $pl={10}>
              <Cell $w={18}><Cash /></Cell><Drop w={18} /><Cell $w={24} $fs={15}>%</Cell><Cell $w={22} $bold $fs={18} $lift={11}>,</Cell>
              <Split w={11} />
              <Cell $w={18}><Decimal><div><Arrow d="l" />.0</div><div>.00</div></Decimal></Cell>
              <Cell $w={30}><Decimal><div>.00</div><div><Arrow d="r" />.0</div></Decimal></Cell>
            </Line>
          </Stack>
        </GroupBody>
        <GroupCaption w={24} launch>数値</GroupCaption>
      </Group>

      <Group $w={475}>
        <GroupBody $pl={7}>
          <Big w={51} icon={<CondIcon />} shift={1} one="条件付き" w1={45} two="書式" w2={24} />
          <Big w={68} icon={<TableIcon />} drop={2} shift={4} one="テーブルとして" w1={64} two="書式設定" w2={48} />
          <Gallery>
            <Swatches>
              <Swatch $bg="#fff" $fg="#000" $picked>標準</Swatch>
              <Swatch $bg="#ffeb9c" $fg="#9c5700">どちらでも...</Swatch>
              <Swatch $bg="#ffc7ce" $fg="#9c0006">悪い</Swatch>
              <Swatch $bg="#c6efce" $fg="#006100">良い</Swatch>
              <Swatch $bg="#a5a5a5" $fg="#fff" $bold $check>チェック セ...</Swatch>
              <Swatch $bg="#ffffcc" $fg="#000" $memo>メモ</Swatch>
            </Swatches>
            <GalleryScroll>
              <div><Tri d="up" c="#bbb" /></div><div><Tri /></div>
              <div><svg width="7" height="7" viewBox="0 0 7 7"><path d="M0 .5h7" stroke="#555" /><path d="M.5 3.500h6l-3 3z" fill="#555" /></svg></div>
            </GalleryScroll>
          </Gallery>
        </GroupBody>
        <GroupCaption w={36}>スタイル</GroupCaption>
      </Group>

      <Group $w={142}>
        <GroupBody $pl={8}>
          <Big w={42} icon={<InsertIcon />} drop={1} one="挿入" w1={24} />
          <Big w={42} icon={<DeleteIcon />} drop={1} one="削除" w1={24} />
          <Big w={42} icon={<FormatIcon />} one="書式" w1={24} />
        </GroupBody>
        <GroupCaption w={19}>セル</GroupCaption>
      </Group>

      <Group $w={221}>
        <GroupBody $pl={11}>
          <Stack $w={100}>
            <Line><Cell $w={16} $lift={3}><Sigma /></Cell><Line $pl={3}><Fit w={57}>オート SUM</Fit></Line><Drop w={30} /></Line>
            <Line><Cell $w={16} $lift={2}><FillDown /></Cell><Line $pl={3}><Fit w={25}>フィル</Fit></Line><Drop w={16} /></Line>
            <Line><Cell $w={16} $lift={3}><Eraser /></Cell><Line $pl={3}><Fit w={24}>クリア</Fit></Line><Drop w={16} /></Line>
          </Stack>
          <Big w={58} icon={<SortIcon />} drop={1} one="並べ替えと" w1={51} two="フィルター" w2={43} />
          <Big w={46} icon={<FindIcon />} drop={1} one="検索と" w1={32} two="選択" w2={24} />
        </GroupBody>
        <GroupCaption w={24}>編集</GroupCaption>
      </Group>
      <RibbonEnd><svg width="13" height="8" viewBox="0 0 13 8"><path d="M.5 7 6.500 1l6 6" fill="none" stroke="#444" strokeWidth="1.200" /></svg></RibbonEnd>
    </Ribbon>
  );
}

function QuickAccess() {
  return (
    <Quick>
      <QuickItem $w={29}><svg width="14" height="14" viewBox="0 0 14 14"><path d="M0 0h14v14H0z" fill="#8b57a8" /><path d="M2 1h10v6H2zM3 9.500h8V13H3z" fill="#fff" /><path d="M5 10.500h2V13H5z" fill="#8b57a8" /></svg></QuickItem>
      <QuickItem $w={21}><svg width="14" height="13" viewBox="0 0 14 13" fill="none" stroke="#b1b1b1" strokeWidth="2.200"><path d="M5.500.5 1.500 4.500l4 4M2 4.500h7c5 0 5 7.500 0 7.500H7" /></svg></QuickItem>
      <QuickItem $w={18}><Chevron c="#bbb" /></QuickItem>
      <QuickItem $w={21}><svg width="14" height="13" viewBox="0 0 14 13" fill="none" stroke="#b1b1b1" strokeWidth="2.200"><path d="m8.500.5 4 4-4 4M12 4.500H5C0 4.500 0 12 5 12h2" /></svg></QuickItem>
      <QuickItem $w={22}><Chevron c="#bbb" /></QuickItem>
      <svg width="5" height="6" viewBox="0 0 5 6"><path d="M0 .5h5" stroke="#444" /><path d="M0 3h5L2.500 5.700z" fill="#444" /></svg>
    </Quick>
  );
}

const COLUMNS = "ABCDEFGHIJKLMNOPQRSTU".split("").map((c) => [c, c === "B" ? 450 : c === "C" ? 73 : 72]);
const ROWS = Array.from({ length: 30 }, (_, i) => i + 1);

function SheetArea() {
  return (
    <Work>
      <Sheet>
        <ColumnHeads>
          <Corner><svg width="17" height="17" viewBox="0 0 17 17"><path d="M17 0v17H0z" fill="#b2b2b2" /></svg></Corner>
          {COLUMNS.map(([c, w]) => <ColumnHead key={c} $w={w} $on={c === "C"}>{c}</ColumnHead>)}
        </ColumnHeads>
        <Grid>
          <RowHeads>
            {ROWS.map((r) => <RowHead key={r} $h={r === 4 ? 44 : 25} $on={r === 13}>{r}</RowHead>)}
          </RowHeads>
          <Body><DocTitle><Bracket $open>「</Bracket>びじんとうひょう<Bracket>」</Bracket><Gap>　</Gap>内部設計書</DocTitle></Body>
          <Selection />
        </Grid>
      </Sheet>
      <VScroll>
        <ScrollButton><Tri d="up" c="#111" w={7} /></ScrollButton>
        <Thumb $vertical />
        <ScrollButton><Tri c="#111" w={7} /></ScrollButton>
      </VScroll>
    </Work>
  );
}

function Bottom() {
  return (
    <>
      <SheetBar>
        <Nav><Tri d="left" c="#bbb" w={6} /><Tri d="right" c="#bbb" w={6} /></Nav>
        <SheetTab $w={67} $on><Fit w={38}>タイトル</Fit></SheetTab>
        <SheetTab $w={76}><Fit w={52}>更新履歴</Fit></SheetTab>
        <SheetTab $w={140}><Fit w={112}>プログラム設計書(新)</Fit></SheetTab>
        <AddSheet><svg width="16" height="16" viewBox="0 0 16 16" fill="none" stroke="#777"><circle cx="8" cy="8" r="7.500" /><path d="M8 4v8M4 8h8" strokeWidth="1.800" /></svg></AddSheet>
        <Dots><svg width="2" height="10" viewBox="0 0 2 10" fill="#b0b0b0"><path d="M0 0h2v2H0zM0 4h2v2H0zM0 8h2v2H0z" /></svg></Dots>
        <HScroll>
          <ScrollButton><Tri d="left" c="#111" w={6} /></ScrollButton>
          <Thumb />
          <ScrollButton><Tri d="right" c="#111" w={6} /></ScrollButton>
        </HScroll>
      </SheetBar>
      <Status>
        <Fit w={47}>準備完了</Fit>
        <StatusIcon>
          <svg width="16" height="15" viewBox="0 0 16 15" fill="none" stroke="#555"><path d="M5 1.500a5 5 0 0 0 0 10" strokeDasharray="3 1" /><path d="M6 0v5.500h2M8 6l7-2M11 0v3" /><path d="m8 6 7 8M15 7l-7 7M9 5.500l3 2 3-2" strokeWidth="1.500" /></svg>
        </StatusIcon>
        <Fit w={155}>アクセシビリティ: 検討が必要です</Fit>
        <Views>
          <ViewButton $on><svg width="13" height="13" viewBox="0 0 13 13" fill="none" stroke="#666"><path d="M.5.5h12v12H.5zM4.500 0v13M8.500 0v13M0 4.500h13M0 8.500h13" /></svg></ViewButton>
          <ViewButton><svg width="14" height="13" viewBox="0 0 14 13" fill="none" stroke="#666"><path d="M.5.5h13v12H.5zM3.500 2.500h7v8h-7zM5 4.500h4M5 6.500h4M5 8.500h4" /></svg></ViewButton>
          <ViewButton><svg width="14" height="13" viewBox="0 0 14 13" fill="none" stroke="#666"><path d="M.5.5h13v12H.5zM4.500 0v7.500M8.500 0v7.500M0 7.500h9" /></svg></ViewButton>
        </Views>
        <svg width="131" height="11" viewBox="-6 0 131 11"><path d="M0 4.500h7M118 4.500h7M121.500 1v7" stroke="#333" /><path d="M13 5.500h100" stroke="#333" /><path d="M61 0h5v11h-5z" fill="#444" /></svg>
        <Zoom><Fit w={33}>100%</Fit></Zoom>
      </Status>
    </>
  );
}

function WinTaskbar() {
  return (
    <Taskbar>
      <Weather>
        <svg width="20" height="20" viewBox="0 0 20 20"><circle cx="10" cy="10" r="10" fill="url(#sun)" /></svg>
        <Lines><Fit w={25}>35°C</Fit><Dim><Fit w={22}>晴れ</Fit></Dim></Lines>
      </Weather>
      <svg width="23" height="23" viewBox="0 0 23 23" fill="url(#win)"><path d="M0 0h11v11H0zM12 0h11v11H12zM0 12h11v11H0zM12 12h11v11H12z" /></svg>
      <Search>
        <svg width="15" height="15" viewBox="0 0 15 15" fill="none" stroke="#e0e0e0" strokeWidth="1.700"><circle cx="6.500" cy="6.500" r="5.500" /><path d="m10.500 10.500 4 4" /></svg>
        <SearchText><Fit w={27}>検索</Fit></SearchText>
        <svg width="20" height="20" viewBox="0 0 20 20"><path d="M0 20V10A10 10 0 1 1 10 19L3 20z" fill="#1763e0" /><circle cx="10" cy="9.500" r="8.800" fill="#fff" /><path d="M6.500 4 9 5v9l-2.500-1.500z" fill="#1f9df0" /><path d="m7 13.500 3.500 1.500 4-2.500V10L10 8l1 2.500 1.500.8z" fill="#1560dc" /></svg>
      </Search>
      {["task", "chat", "store", "mail", "folder", "py", "edge"].map((k) => <TaskSlot key={k} $run={k === "folder"}>{ICONS[k]}</TaskSlot>)}
      <TaskSlot><Chrome /></TaskSlot>
      <TaskSlot>{ICONS.dark}</TaskSlot>
      <TaskSlot><Badged>{ICONS.todo}<Badge $x={13} $bg="#28e9ff" $fg="#111" $fs={11}>5</Badge></Badged></TaskSlot>
      <TaskSlot $run><Badged><Chrome /><Badge $x={12} $bg="#689f38" $fg="#fff" $fs={7}>秀夫</Badge></Badged></TaskSlot>
      {["origin", "steam", "ring"].map((k) => <TaskSlot key={k} $run>{ICONS[k]}</TaskSlot>)}
      <TaskSlot $run><LineTile><span>LINE</span></LineTile></TaskSlot>
      <TaskSlot $run>{ICONS.film}</TaskSlot>
      <TaskSlot $active>{ICONS.xl}</TaskSlot>
      <Tray>
        <TrayItem $w={32}><svg width="11" height="7" viewBox="0 0 11 7"><path d="m.8 6 4.700-4.800L10.200 6" fill="none" stroke="#fff" strokeWidth="1.600" /></svg></TrayItem>
        <TrayItem $w={30}><svg width="12" height="16" viewBox="0 0 12 16"><path d="M.5 16 6 .8 11.500 16M2.500 10.500h7" fill="none" stroke="#fff" strokeWidth="1.300" /></svg></TrayItem>
        <TrayItem $w={24}><svg width="16" height="12" viewBox="0 0 16 12" fill="none" stroke="#fff" strokeWidth="1.200"><path d="M.5 4.500a11 11 0 0 1 15 0M2.800 6.800a7.500 7.500 0 0 1 10.400 0M5 9a4.400 4.400 0 0 1 6 0" /><circle cx="8" cy="10.500" r="1" fill="#fff" /></svg></TrayItem>
        <TrayItem $w={33}><svg width="17" height="13" viewBox="0 0 17 13" fill="none" stroke="#fff" strokeWidth="1.100"><path d="M.5 4.500h3L7 1v11L3.500 8.500h-3zM9 4.500q1.500 2 0 4M11 2.500q3 4 0 8M13.200 1q4.500 5.500 0 11" /></svg></TrayItem>
        <Lines $end><Fit w={28}>13:47</Fit><Fit w={61}>2023/07/11</Fit></Lines>
      </Tray>
    </Taskbar>
  );
}

export default function App() {
  return (
    <Window lang="ja">
      <Global />
      <Top />
      <RibbonBar />
      <QuickAccess />
      <SheetArea />
      <Bottom />
      <WinTaskbar />
      <Defs />
    </Window>
  );
}
